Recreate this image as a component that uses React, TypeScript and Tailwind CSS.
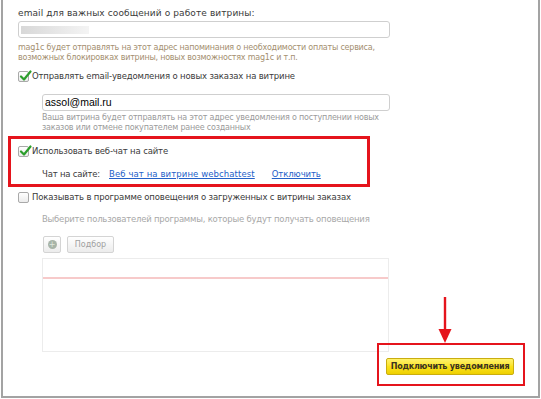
function Check({ checked }: { checked?: boolean }) {
  return (
    <span className="relative inline-block w-[11px] h-[11px] shrink-0 rounded-[2px] border border-[#a9a9a9] bg-gradient-to-b from-white to-[#ececec]">
      {checked && (
        <svg className="absolute -top-[2px] left-[0px]" width="13" height="12" viewBox="0 0 13 12">
          <path d="M2 6.5 L5 9.5 L11.5 1.5" fill="none" stroke="#2c9e2c" strokeWidth="2.2" strokeLinecap="round" strokeLinejoin="round" />
        </svg>
      )}
    </span>
  );
}

export default function App() {
  return (
    <div className="relative w-[541px] h-[399px] bg-white font-['DejaVu_Sans',sans-serif] text-[#3a3a3a]">
      <div className="w-[539px] h-[398px] ml-[1px] border-x-2 border-b-2 border-[#a3a3a3] pl-[15px] pt-[7px]">
        <div className="text-[9px] leading-[12px] tracking-[0.1px]">email для важных сообщений о работе витрины:</div>
        <div className="mt-[2px] w-[372px] h-[17px] rounded-[3px] border border-[#cfcfcf] flex items-center px-[2px]">
          <div className="w-[68px] h-[8px] bg-gradient-to-r from-[#d8d8d8] via-[#e6e6e6] to-[#f4f4f4]" />
        </div>
        <div className="mt-[5px] text-[8px] leading-[10px] text-[#a48f70] tracking-[-0.22px]">
          mag1c будет отправлять на этот адрес напоминания о необходимости оплаты сервиса,
          <br />
          возможных блокировках витрины, новых возможностях mag1c и т.п.
        </div>
        <div className="mt-[7px] flex items-center gap-[3px] h-[12px] text-[8.5px] tracking-[-0.15px]">
          <Check checked />
          <span>Отправлять email-уведомления о новых заказах на витрине</span>
        </div>
        <div className="ml-[24px] mt-[12px] w-[348px] h-[17px] rounded-[3px] border border-[#cfcfcf] flex items-center px-[2px] text-[10.5px] text-black font-['Liberation_Sans',sans-serif]">
          assol@mail.ru
        </div>
        <div className="ml-[24px] mt-[2px] text-[8px] leading-[10px] text-[#9a9a9a] tracking-[-0.2px]">
          Ваша витрина будет отправлять на этот адрес уведомления о поступлении новых
          <br />
          заказов или отмене покупателем ранее созданных
        </div>
        <div className="mt-[12px] flex items-center gap-[3px] h-[12px] text-[8.5px] tracking-[-0.15px]">
          <Check checked />
          <span>Использовать веб-чат на сайте</span>
        </div>
        <div className="ml-[24px] mt-[11px] flex items-center h-[12px] text-[8.5px] tracking-[-0.2px]">
          <span>Чат на сайте:</span>
          <a className="ml-[9px] text-[8.5px] tracking-[0.1px] text-[#2461c8] underline">Веб чат на витрине webchattest</a>
          <a className="ml-[17px] text-[8.5px] tracking-[-0.1px] text-[#2461c8] underline">Отключить</a>
        </div>
        <div className="mt-[11px] flex items-center gap-[3px] h-[12px] text-[8.5px] tracking-[-0.15px]">
          <Check />
          <span>Показывать в программе оповещения о загруженных с витрины заказах</span>
        </div>
        <div className="ml-[24px] mt-[10px] h-[12px] leading-[12px] text-[8.5px] text-[#a8a8a8] tracking-[-0.22px]">
          Выберите пользователей программы, которые будут получать оповещения
        </div>
        <div className="ml-[25px] mt-[11px] flex gap-[6px]">
          <div className="w-[18px] h-[17px] rounded-[2px] border border-[#d4d4d4] bg-gradient-to-b from-white to-[#ececec] flex items-center justify-center">
            <span className="w-[9px] h-[9px] rounded-full bg-[#a8b4a8] flex items-center justify-center text-[8px] leading-none text-[#dfe8df]">+</span>
          </div>
          <div className="w-[47px] h-[17px] rounded-[2px] border border-[#d4d4d4] bg-gradient-to-b from-white to-[#ececec] flex items-center justify-center text-[8px] text-[#a0a0a0]">
            Подбор
          </div>
        </div>
        <div className="ml-[24px] mt-[5px] w-[347px] h-[94px] border border-[#ececec] pt-[18px]">
          <div className="h-[2px] bg-[#f7caca]" />
        </div>
        <div className="ml-[368px] mt-[6px] w-[128px] h-[17px] rounded-[2px] border border-[#c9ad10] bg-gradient-to-b from-[#fff36a] via-[#fbe21a] to-[#eed000] flex items-center justify-center text-[8px] font-bold text-[#3a3320] tracking-[-0.2px]">
          Подключить уведомления
        </div>
      </div>

      <div className="absolute left-[8px] top-[136px] w-[362px] h-[51px] border-[3px] border-[#e5141c]" />
      <div className="absolute left-[377px] top-[343px] w-[148px] h-[43px] border-2 border-[#e5141c]" />
      <svg className="absolute left-[438px] top-[297px]" width="14" height="47" viewBox="0 0 14 47">
        <line x1="7" y1="0" x2="7" y2="36" stroke="#e5141c" strokeWidth="2.4" />
        <path d="M0.5 32 L13.5 32 L7 46 Z" fill="#e5141c" />
      </svg>
    </div>
  );
}
